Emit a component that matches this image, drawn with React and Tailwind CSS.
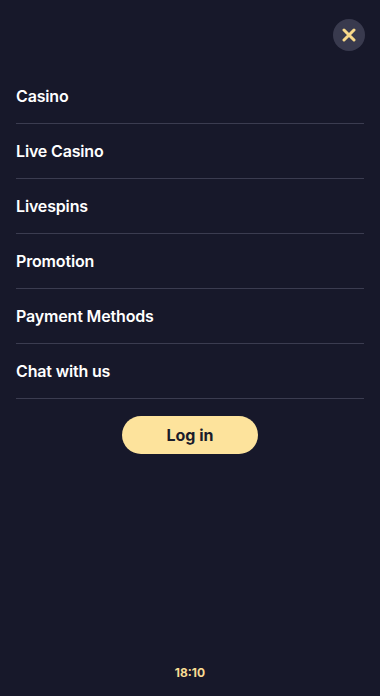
import React from 'react';

const items = ['Casino', 'Live Casino', 'Livespins', 'Promotion', 'Payment Methods', 'Chat with us'];

export default function App() {
    return (
        <div
            className="h-[696px] w-full bg-[#17182a] flex flex-col text-white"
            style={{ fontFamily: 'Inter, "Noto Sans", sans-serif' }}
        >
            {/* Close */}
            <div className="flex justify-end pt-[19px] pr-[15px]">
                <button className="w-8 h-8 rounded-full bg-[#393a4e] flex items-center justify-center">
                    <svg width="14" height="14" viewBox="0 0 14 14">
                        <path d="M2 2 L12 12 M12 2 L2 12" stroke="#f8d98a" strokeWidth="3" strokeLinecap="round" />
                    </svg>
                </button>
            </div>

            {/* Menu */}
            <nav className="mt-[18px] px-4">
                {items.map((item) => (
                    <a
                        key={item}
                        href="#"
                        className="flex items-center h-[55px] border-b border-[#3b3c50] text-[16px] font-semibold tracking-[-0.01em]"
                    >
                        {item}
                    </a>
                ))}
            </nav>

            <div className="flex justify-center mt-[17px]">
                <button className="w-[136px] h-[38px] rounded-full bg-[#fde39c] text-[#1b1c2b] text-[16px] font-bold">
                    Log in
                </button>
            </div>

            <div className="mt-auto pb-[14px] text-center text-[12px] font-bold text-[#f8dc94]">18:10</div>
        </div>
    );
}
